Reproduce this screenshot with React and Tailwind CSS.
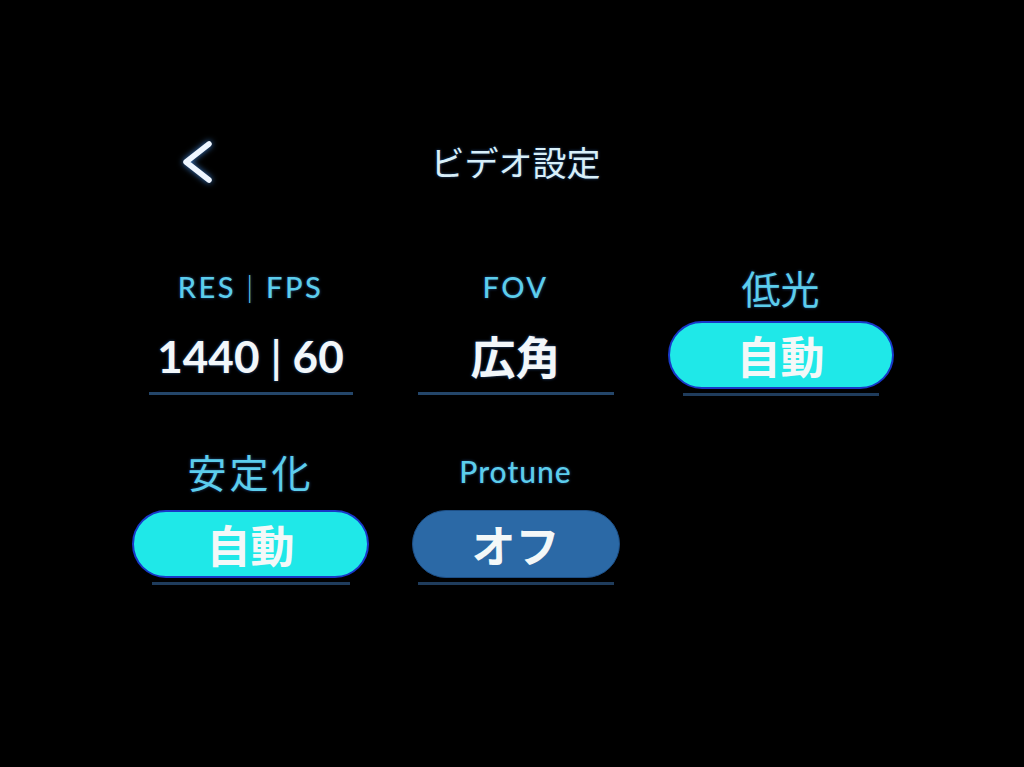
const LATIN = "font-['Lato','Noto_Sans_CJK_JP',sans-serif]";
const CJK = "font-['Noto_Sans_CJK_JP','Noto_Sans',sans-serif]";

// A value shown as plain text over a thin underline
function TextValue({ children, font, size, width }) {
  return (
    <div className="flex flex-col items-center">
      <div className={`h-[68px] flex items-center justify-center font-bold text-[#f2f7fa] ${font} ${size} [text-shadow:0_0_3px_rgba(70,150,255,0.55)]`}>
        {children}
      </div>
      <div className={`h-[3px] mt-[2px] bg-[#24466a] ${width}`} />
    </div>
  );
}

// A value shown as a pill over a thin underline
function PillValue({ children, pill, width, lineWidth }) {
  return (
    <div className="flex flex-col items-center">
      <div className={`h-[68px] rounded-full flex items-center justify-center font-bold text-[44px] text-[#f4f8f8] ${CJK} ${pill} ${width}`}>
        {children}
      </div>
      <div className={`h-[3px] mt-[4px] bg-[#1f3c5c] ${lineWidth}`} />
    </div>
  );
}

function Label({ children, font, size }) {
  return (
    <div className={`h-[34px] flex items-center justify-center text-[#5ccdec] ${font} ${size} [text-shadow:0_0_3px_rgba(70,150,255,0.5)]`}>
      {children}
    </div>
  );
}

export default function App() {
  const cyan = "bg-[#1fe8e8] border-2 border-[#1838c8]";
  const blue = "bg-[#2b69a6] border border-[#1d4f86]";

  return (
    <div className="w-full h-[767px] bg-black overflow-hidden">
      {/* Header */}
      <div className="pt-[136px] pl-[118px] grid grid-cols-[265px_265px_265px] h-[180px]">
        <div className="pl-[60px] flex items-center">
          <svg width="36" height="44" viewBox="0 0 36 44" className="drop-shadow-[0_0_3px_rgba(80,160,255,0.8)]">
            <path d="M31 4 L8 22 L31 40" fill="none" stroke="#eef6ff" strokeWidth="5.5" strokeLinecap="round" strokeLinejoin="round" />
          </svg>
        </div>
        <div className={`flex items-center justify-center text-[34px] text-[#d8eff9] ${CJK} [text-shadow:0_0_3px_rgba(70,150,255,0.5)]`}>
          ビデオ設定
        </div>
        <div />
      </div>

      {/* Settings grid */}
      <div className="pl-[118px] mt-[90px] grid grid-cols-[265px_265px_265px]">
        <div className="flex flex-col items-center">
          <Label font={LATIN} size="text-[29px] font-medium tracking-[2.5px] whitespace-pre">
            RES<span className="font-light"> | </span>FPS
          </Label>
          <div className="mt-[18px]">
            <TextValue font={LATIN} size="text-[44px] whitespace-pre" width="w-[204px]">
              1440<span className="font-semibold"> | </span>60
            </TextValue>
          </div>
        </div>
        <div className="flex flex-col items-center">
          <Label font={LATIN} size="text-[29px] font-medium tracking-[2.5px]">FOV</Label>
          <div className="mt-[18px]">
            <TextValue font={CJK} size="text-[45px]" width="w-[196px]">広角</TextValue>
          </div>
        </div>
        <div className="flex flex-col items-center">
          <Label font={CJK} size="text-[39px]">低光</Label>
          <div className="mt-[17px]">
            <PillValue pill={cyan} width="w-[226px]" lineWidth="w-[196px]">自動</PillValue>
          </div>
        </div>
      </div>

      <div className="pl-[118px] mt-[58px] grid grid-cols-[265px_265px_265px]">
        <div className="flex flex-col items-center">
          <Label font={CJK} size="text-[39px] tracking-[3px]">安定化</Label>
          <div className="mt-[22px]">
            <PillValue pill={cyan} width="w-[237px]" lineWidth="w-[198px]">自動</PillValue>
          </div>
        </div>
        <div className="flex flex-col items-center">
          <Label font={LATIN} size="text-[30px] font-medium tracking-[1px]">Protune</Label>
          <div className="mt-[22px]">
            <PillValue pill={blue} width="w-[208px]" lineWidth="w-[196px]">オフ</PillValue>
          </div>
        </div>
        <div />
      </div>
    </div>
  );
}
